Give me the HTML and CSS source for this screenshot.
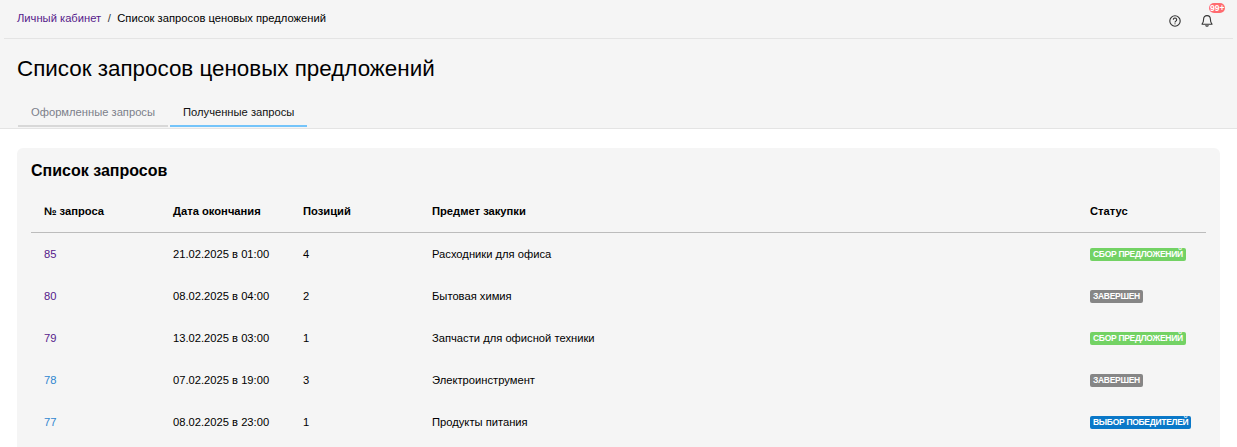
FILE: index.html
```html
<!DOCTYPE html>
<html lang="ru">
<head>
  <meta charset="UTF-8">
  <title>Список запросов ценовых предложений</title>
  <link rel="stylesheet" href="styles.css">
</head>
<body>
  <!-- Top section -->
  <div class="top">
    <div class="topbar">
      <div class="crumbs">
        <a class="crumb-link" href="#">Личный кабинет</a>
        <span class="crumb-sep">/</span>
        <span>Список запросов ценовых предложений</span>
      </div>
      <div class="top-icons">
        <svg class="icon" viewBox="0 0 14 14" aria-label="Помощь">
          <circle cx="7" cy="7" r="5.2" fill="none" stroke="currentColor" stroke-width="1.1"/>
          <path d="M5.300 5.700a1.700 1.700 0 1 1 2.600 1.400c-.6.4-.9.7-.9 1.300" fill="none" stroke="currentColor" stroke-width="1.100"/>
          <rect x="6.500" y="9.300" width="1" height="1" fill="currentColor"/>
        </svg>
        <div class="bell">
          <svg class="icon" viewBox="0 0 14 14" aria-label="Уведомления">
            <path d="M7 1.600c-2.200 0-3.400 1.700-3.400 3.700 0 2.400-.5 3.600-1.600 4.900h10c-1.100-1.300-1.600-2.500-1.600-4.900 0-2-1.200-3.700-3.400-3.700z" fill="none" stroke="currentColor" stroke-width="1.100" stroke-linejoin="round"/>
            <path d="M5.600 11.200a1.500 1.500 0 0 0 2.800 0" fill="none" stroke="currentColor" stroke-width="1.100"/>
          </svg>
          <span class="bell-badge">99+</span>
        </div>
      </div>
    </div>
    <h1 class="page-title">Список запросов ценовых предложений</h1>
    <div class="tabs">
      <div class="tab">Оформленные запросы</div>
      <div class="tab tab-active">Полученные запросы</div>
    </div>
  </div>

  <!-- Requests card -->
  <div class="content">
    <div class="card">
      <h2 class="card-title">Список запросов</h2>
      <div class="row row-head">
        <div>№ запроса</div>
        <div>Дата окончания</div>
        <div>Позиций</div>
        <div>Предмет закупки</div>
        <div>Статус</div>
      </div>
      <div class="row">
        <div><a class="req-link visited" href="#">85</a></div>
        <div>21.02.2025 в 01:00</div>
        <div>4</div>
        <div>Расходники для офиса</div>
        <div><span class="status status-green">Сбор предложений</span></div>
      </div>
      <div class="row">
        <div><a class="req-link visited" href="#">80</a></div>
        <div>08.02.2025 в 04:00</div>
        <div>2</div>
        <div>Бытовая химия</div>
        <div><span class="status status-gray">Завершен</span></div>
      </div>
      <div class="row">
        <div><a class="req-link visited" href="#">79</a></div>
        <div>13.02.2025 в 03:00</div>
        <div>1</div>
        <div>Запчасти для офисной техники</div>
        <div><span class="status status-green">Сбор предложений</span></div>
      </div>
      <div class="row">
        <div><a class="req-link" href="#">78</a></div>
        <div>07.02.2025 в 19:00</div>
        <div>3</div>
        <div>Электроинструмент</div>
        <div><span class="status status-gray">Завершен</span></div>
      </div>
      <div class="row">
        <div><a class="req-link" href="#">77</a></div>
        <div>08.02.2025 в 23:00</div>
        <div>1</div>
        <div>Продукты питания</div>
        <div><span class="status status-blue">Выбор победителей</span></div>
      </div>
    </div>
  </div>
</body>
</html>
```

FILE: styles.css
```css
/* Reset */
* {
  margin: 0;
  padding: 0;
  box-sizing: border-box;
}

body {
  background-color: #ffffff;
  color: #000000;
  font-family: "Liberation Sans", Arial, sans-serif;
  font-size: 11.2px;
}

a {
  text-decoration: none;
}

/* Top section */
.top {
  background-color: #f5f5f5;
  border-bottom: 1px solid #e4e4e4;
  height: 129px;
}

.topbar {
  display: flex;
  align-items: center;
  justify-content: space-between;
  height: 39px;
  margin: 0 4px;
  padding: 0 19px 2px 13px;
  border-bottom: 1px solid #e4e4e4;
}

.crumbs {
  display: flex;
  gap: 6.5px;
}

.crumb-link {
  color: #551a8b;
}

.crumb-sep {
  color: #333333;
}

.top-icons {
  display: flex;
  align-items: center;
  gap: 18px;
  margin-top: 6px;
  color: #333333;
}

.icon {
  display: block;
  width: 14px;
  height: 14px;
}

.bell {
  position: relative;
}

.bell-badge {
  position: absolute;
  top: -11px;
  left: 9px;
  padding: 0 1px;
  background-color: #ff6b70;
  border-radius: 6px;
  color: #ffffff;
  font-size: 8.5px;
  font-weight: 700;
  line-height: 10px;
}

.page-title {
  padding: 17px 0 0 17px;
  font-size: 22.4px;
  font-weight: 400;
  line-height: 26px;
}

/* Tabs */
.tabs {
  display: flex;
  gap: 2px;
  margin: 18px 0 0 18px;
}

.tab {
  width: 150px;
  height: 27px;
  padding-top: 6px;
  padding-left: 13px;
  border-bottom: 2px solid #d8d8d8;
  color: #7c7f8a;
}

.tab-active {
  width: 137px;
  border-bottom-color: #74c4fa;
  color: #111111;
}

/* Card */
.content {
  padding: 19px 17px 0;
}

.card {
  padding: 13px 14px 4px;
  background-color: #f5f5f5;
  border-radius: 6px 6px 0 0;
}

.card-title {
  font-size: 16px;
  font-weight: 700;
  line-height: 20px;
}

.row {
  display: grid;
  grid-template-columns: 129px 130px 129px 658px 1fr;
  align-items: center;
  height: 42px;
  padding-left: 13px;
}

.row-head {
  height: 52px;
  padding-top: 8px;
  border-bottom: 1px solid #bcbcbc;
  font-weight: 700;
}

.req-link {
  color: #2f86d0;
}

.req-link.visited {
  color: #551a8b;
}

/* Status badges */
.status {
  display: inline-block;
  padding: 0 3px;
  border-radius: 2px;
  color: #ffffff;
  font-size: 8.5px;
  font-weight: 700;
  letter-spacing: -0.3px;
  line-height: 13px;
  text-transform: uppercase;
  vertical-align: middle;
}

.status-green {
  background-color: #73d264;
}

.status-gray {
  background-color: #868686;
}

.status-blue {
  background-color: #0a78c8;
}
```
